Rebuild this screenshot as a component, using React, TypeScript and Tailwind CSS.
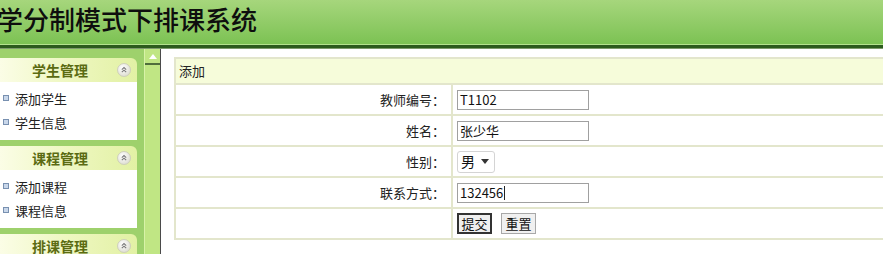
import React from "react";

const font = { fontFamily: '"Noto Sans CJK SC", "Liberation Sans", sans-serif' };

const CollapseIcon: React.FC = () => (
  <svg width="14" height="14" viewBox="0 0 14 14">
    <defs>
      <radialGradient id="cg" cx="0.4" cy="0.35" r="0.7">
        <stop offset="0" stopColor="#ffffff" />
        <stop offset="1" stopColor="#dcdcd0" />
      </radialGradient>
    </defs>
    <circle cx="7" cy="7" r="6.5" fill="url(#cg)" stroke="#c8c8b8" strokeWidth="0.8" />
    <path d="M4.8 6.6 L7 4.6 L9.2 6.6 M4.8 9.2 L7 7.2 L9.2 9.2" fill="none" stroke="#777" strokeWidth="1.1" />
  </svg>
);

const SidePanel: React.FC<{ title: string; items?: string[] }> = ({ title, items }) => (
  <div className="w-[137px] shrink-0">
    <div className="h-[24px] rounded-tr-[6px] bg-gradient-to-r from-[#fbfde6] via-[#eef7c0] to-[#e2f1a4] flex items-center relative">
      <span className="w-[120px] text-center text-[14px] font-bold text-[#5b6b12] leading-none">{title}</span>
      <span className="absolute right-[6px] top-[5px]">
        <CollapseIcon />
      </span>
    </div>
    {items && (
      <div className="h-[58px] bg-white pt-[9px] flex flex-col gap-[10px]">
        {items.map((it) => (
          <div key={it} className="flex items-center h-[14px]">
            <span className="ml-[3px] w-[6px] h-[6px] border border-[#7890b0] bg-[#c9d7ea]" />
            <span className="ml-[6px] text-[13px] text-[#222] leading-none">{it}</span>
          </div>
        ))}
      </div>
    )}
  </div>
);

const rows = [
  { label: "教师编号：", kind: "input", value: "T1102" },
  { label: "姓名：", kind: "input", value: "张少华" },
  { label: "性别：", kind: "select", value: "男" },
  { label: "联系方式：", kind: "input", value: "132456" },
];

export default function App() {
  return (
    <div className="w-[883px] h-[254px] overflow-hidden bg-white" style={font}>
      {/* top banner */}
      <div className="h-[44px] bg-gradient-to-b from-[#a6d67c] to-[#7cc253] flex items-center pb-[7px]">
        <h1 className="ml-[-3px] text-[26px] leading-none text-[#0e0e0e] font-medium">
          学分制模式下排课系统
        </h1>
      </div>
      <div className="h-[1px] bg-[#b4e28e]" />
      <div className="h-[3px] bg-[#2c5b1d]" />
      <div className="h-[1px] bg-[#7d9a6c]" />

      <div className="flex h-[205px]">
        {/* sidebar */}
        <div className="w-[144px] bg-[#9ed16c] pt-[9px] flex flex-col gap-[6px]">
          <SidePanel title="学生管理" items={["添加学生", "学生信息"]} />
          <SidePanel title="课程管理" items={["添加课程", "课程信息"]} />
          <SidePanel title="排课管理" />
        </div>
        {/* scroll strip */}
        <div className="w-[16px] bg-[#c0e684] border-l border-[#d8f2a8] flex flex-col">
          <div className="h-[16px] flex items-center justify-center border-b-2 border-[#4f6d3c]">
            <svg width="8" height="5" viewBox="0 0 8 5">
              <path d="M0 5 L4 0 L8 5 Z" fill="#ffffff" />
            </svg>
          </div>
        </div>
        <div className="w-[1px] bg-[#4a4a4a]" />

        {/* main */}
        <div className="flex-1 pt-[8px] pl-[13px] overflow-hidden">
          <div className="w-[740px] border-l-2 border-[#e3e6cc]">
            <div className="h-[28px] bg-[#f6fcda] border-y-2 border-[#e3e6cc] flex items-center pl-[3px] text-[13px] text-[#222]">
              添加
            </div>
            {rows.map((r) => (
              <div key={r.label} className="h-[31px] flex border-b-2 border-[#e3e6cc]">
                <div className="w-[277px] border-r-2 border-[#e3e6cc] flex items-center justify-end pr-[6px] text-[13px] text-[#222]">
                  {r.label}
                </div>
                <div className="flex items-center pl-[4px]">
                  {r.kind === "input" ? (
                    <div className="w-[132px] h-[20px] border border-[#a0a0a0] bg-white flex items-center pl-[2px] text-[13px] text-[#111]">
                      {r.value}
                      {r.label === "联系方式：" && <span className="w-[1px] h-[14px] bg-[#222] ml-[1px]" />}
                    </div>
                  ) : (
                    <div className="w-[38px] h-[22px] border border-[#d4d4d4] rounded-[3px] bg-white flex items-center pl-[3px] text-[14px] text-[#111]">
                      男
                      <svg className="ml-[6px]" width="8" height="5" viewBox="0 0 8 5">
                        <path d="M0 0 L8 0 L4 5 Z" fill="#333" />
                      </svg>
                    </div>
                  )}
                </div>
              </div>
            ))}
            <div className="h-[31px] flex border-b-2 border-[#e3e6cc]">
              <div className="w-[277px] border-r-2 border-[#e3e6cc]" />
              <div className="flex items-center pl-[4px] gap-[9px]">
                <button className="w-[35px] h-[21px] border-2 border-[#333] bg-[#efefef] text-[13px] text-[#111] leading-none">
                  提交
                </button>
                <button className="w-[35px] h-[21px] border border-[#a8a8a8] bg-[#f0f0f0] text-[13px] text-[#111] leading-none">
                  重置
                </button>
              </div>
            </div>
          </div>
        </div>
      </div>
    </div>
  );
}
